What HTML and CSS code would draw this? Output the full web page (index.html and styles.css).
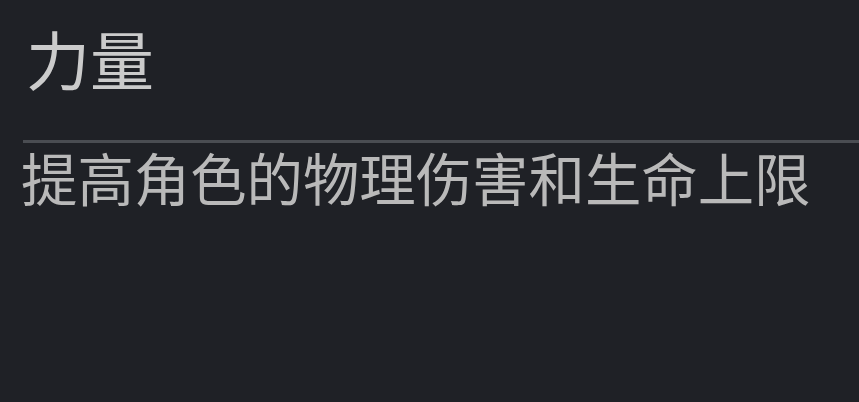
FILE: index.html
```html
<!DOCTYPE html>
<html lang="zh-CN">
<head>
    <meta charset="UTF-8">
    <meta name="viewport" content="width=device-width, initial-scale=1.0">
    <title>力量</title>
    <link rel="stylesheet" href="styles.css">
</head>
<body>
    <div class="tooltip">
        <h1 class="stat-name">力量</h1>
        <p class="stat-desc">提高角色的物理伤害和生命上限</p>
    </div>
</body>
</html>
```

FILE: styles.css
```css
html, body {
    margin: 0;
    padding: 0;
    height: 100%;
    background-color: #1f2126;
}

body {
    font-family: "Noto Sans CJK SC", "Noto Sans", sans-serif;
}

.tooltip {
    padding: 14px 0 0 23px;
}

.stat-name {
    margin: 0;
    padding: 0 0 40px 3px;
    font-size: 64px;
    font-weight: 400;
    line-height: 86px;
    color: #cbcbcb;
    border-bottom: 3px solid #4a4d52;
}

.stat-desc {
    margin: 0 0 0 -2px;
    font-size: 56.4px;
    line-height: 68px;
    color: #b9b9b9;
}
```
